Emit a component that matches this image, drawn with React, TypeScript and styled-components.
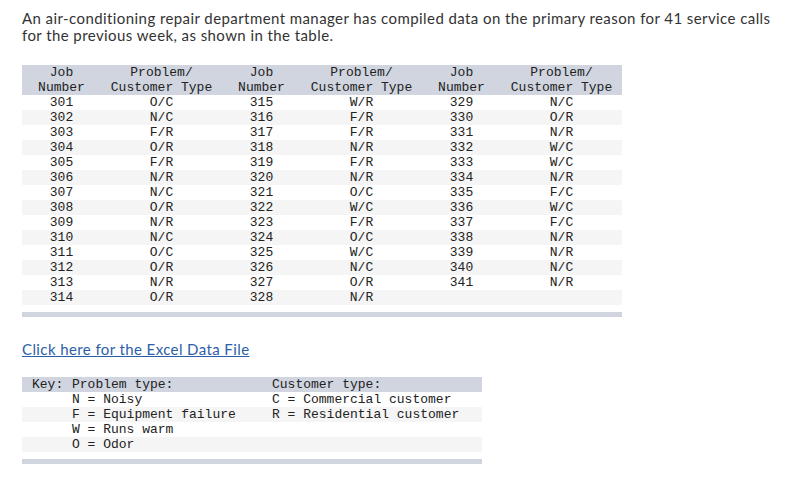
import * as React from 'react';
import styled, { createGlobalStyle } from 'styled-components';

const GlobalStyle = createGlobalStyle`
    body {
        margin: 0;
        background: #fff;
    }
`;

const Page = styled.div`
    padding: 10px 0 0 22px;
    font-family: Lato, 'Liberation Sans', sans-serif;
    color: #333;
`;

const Intro = styled.p`
    margin: 0;
    font-size: 15px;
    line-height: 17px;
    letter-spacing: 0.42px;
    width: 760px;
`;

const Table = styled.div`
    margin-top: 21px;
    width: 600px;
    font-family: 'Liberation Mono', 'Courier New', monospace;
    font-size: 13px;
    line-height: 15px;
    color: #222;
`;

const Row = styled.div<{ $head?: boolean; $alt?: boolean }>`
    display: grid;
    grid-template-columns: repeat(3, 79px 121px);
    background: ${(p) => (p.$head ? '#d0d5e0' : p.$alt ? '#f5f5f5' : '#fff')};
`;

const Cell = styled.div`
    text-align: center;
    white-space: pre;
    min-height: 15px;
`;

const Bar = styled.div<{ $width: number }>`
    margin-top: 7px;
    width: ${(p) => p.$width}px;
    height: 5px;
    background: #d0d5e0;
`;

const DataLink = styled.a`
    display: inline-block;
    margin-top: 23px;
    font-size: 15px;
    line-height: 18px;
    letter-spacing: 0.4px;
    color: #2c5ea8;
    text-decoration: underline;
`;

const KeyTable = styled.div`
    margin-top: 19px;
    width: 460px;
    font-family: 'Liberation Mono', 'Courier New', monospace;
    font-size: 13px;
    line-height: 15px;
    color: #222;
`;

const KeyRow = styled.div<{ $head?: boolean; $alt?: boolean }>`
    display: grid;
    grid-template-columns: 50px 200px 1fr;
    background: ${(p) => (p.$head ? '#d0d5e0' : p.$alt ? '#f5f5f5' : '#fff')};
    & > div:first-child {
        padding-left: 10px;
    }
`;

const KeyCell = styled.div`
    white-space: pre;
    min-height: 15px;
`;

const cols: [number, string[]][] = [
    [301, ['O/C', 'N/C', 'F/R', 'O/R', 'F/R', 'N/R', 'N/C', 'O/R', 'N/R', 'N/C', 'O/C', 'O/R', 'N/R', 'O/R']],
    [315, ['W/R', 'F/R', 'F/R', 'N/R', 'F/R', 'N/R', 'O/C', 'W/C', 'F/R', 'O/C', 'W/C', 'N/C', 'O/R', 'N/R']],
    [329, ['N/C', 'O/R', 'N/R', 'W/C', 'W/C', 'N/R', 'F/C', 'W/C', 'F/C', 'N/R', 'N/R', 'N/C', 'N/R']],
];

const keyRows: [string, string, string][] = [
    ['', 'N = Noisy', 'C = Commercial customer'],
    ['', 'F = Equipment failure', 'R = Residential customer'],
    ['', 'W = Runs warm', ''],
    ['', 'O = Odor', ''],
];

const App = () => (
    <Page>
        <GlobalStyle />
        <Intro>
            An air-conditioning repair department manager has compiled data on the primary reason for 41 service calls
            for the previous week, as shown in the table.
        </Intro>
        <Table>
            <Row $head>
                {cols.map(([start]) => (
                    <React.Fragment key={start}>
                        <Cell>{'Job\nNumber'}</Cell>
                        <Cell>{'Problem/\nCustomer Type'}</Cell>
                    </React.Fragment>
                ))}
            </Row>
            {Array.from({ length: 14 }, (_, i) => (
                <Row key={i} $alt={i % 2 === 1}>
                    {cols.map(([start, codes]) => (
                        <React.Fragment key={start}>
                            <Cell>{codes[i] ? start + i : ''}</Cell>
                            <Cell>{codes[i] ?? ''}</Cell>
                        </React.Fragment>
                    ))}
                </Row>
            ))}
            <Bar $width={600} />
        </Table>
        <DataLink href="#">Click here for the Excel Data File</DataLink>
        <KeyTable>
            <KeyRow $head>
                <KeyCell>Key:</KeyCell>
                <KeyCell>Problem type:</KeyCell>
                <KeyCell>Customer type:</KeyCell>
            </KeyRow>
            {keyRows.map((r, i) => (
                <KeyRow key={i} $alt={i % 2 === 1}>
                    {r.map((t, j) => (
                        <KeyCell key={j}>{t}</KeyCell>
                    ))}
                </KeyRow>
            ))}
            <Bar $width={460} />
        </KeyTable>
    </Page>
);

export default App;
